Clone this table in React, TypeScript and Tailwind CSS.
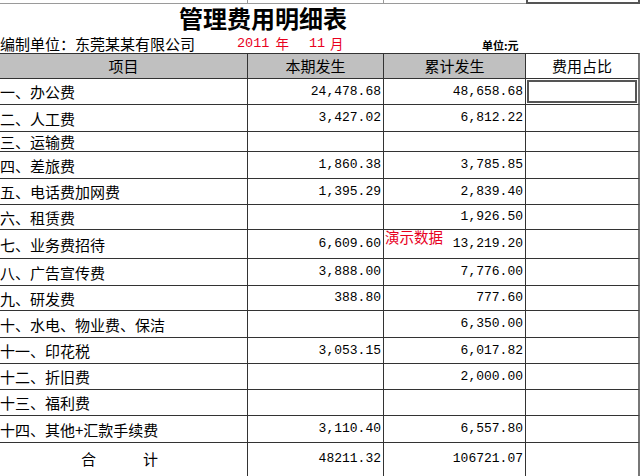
import React from "react";

const ROWS: [string, string, string, number][] = [
  ["一、办公费", "24,478.68", "48,658.68", 26],
  ["二、人工费", "3,427.02", "6,812.22", 27],
  ["三、运输费", "", "", 20],
  ["四、差旅费", "1,860.38", "3,785.85", 27],
  ["五、电话费加网费", "1,395.29", "2,839.40", 26],
  ["六、租赁费", "", "1,926.50", 25],
  ["七、业务费招待", "6,609.60", "13,219.20", 29],
  ["八、广告宣传费", "3,888.00", "7,776.00", 27],
  ["九、研发费", "388.80", "777.60", 25],
  ["十、水电、物业费、保洁", "", "6,350.00", 27],
  ["十一、印花税", "3,053.15", "6,017.82", 26],
  ["十二、折旧费", "", "2,000.00", 26],
  ["十三、福利费", "", "", 26],
  ["十四、其他+汇款手续费", "3,110.40", "6,557.80", 27],
];

const cjk = "font-['Noto_Sans_CJK_SC',sans-serif]";
const mono = "font-['Liberation_Mono',monospace]";

export default function App() {
  return (
    <div className={`relative w-[643px] h-[476px] overflow-hidden bg-white text-black ${cjk}`}>
      {/* strip of the cells above */}
      <div className="grid grid-cols-[248px_136px_142px_114px] h-[4px]">
        <div className="border-b border-r border-[#9a9a9a]" />
        <div className="border-b border-r border-[#9a9a9a]" />
        <div className="border-b border-[#9a9a9a]" />
        <div className="border-b-2 border-x-2 border-[#555]" />
      </div>

      {/* title */}
      <div className="w-[526px] h-[28px] flex items-center justify-center">
        <span className="text-[24px] font-bold leading-none">管理费用明细表</span>
      </div>

      {/* sub heading */}
      <div className="h-[21px] flex items-center pt-[2px]">
        <span className="w-[237px] text-[15px] leading-none">编制单位：东莞某某有限公司</span>
        <span className="w-[245px] flex items-center text-[13.5px] leading-none text-[#e8001e]">
          <span className={`${mono} text-[13.5px]`}>2011</span>
          <span className="ml-[6px]">年</span>
          <span className={`${mono} text-[13.5px] ml-[20px]`}>11</span>
          <span className="ml-[5px]">月</span>
        </span>
        <span className="text-[11px] font-bold leading-none pt-[3px]">单位:元</span>
      </div>

      {/* table */}
      <div className="grid grid-cols-[248px_136px_142px_114px]">
        <div className="h-[26px] bg-[#c0c0c0] border-y border-r border-[#333] flex items-center justify-center text-[15px]">项目</div>
        <div className="h-[26px] bg-[#c0c0c0] border-y border-r border-[#333] flex items-center justify-center text-[15px]">本期发生</div>
        <div className="h-[26px] bg-[#c0c0c0] border-y border-r border-[#333] flex items-center justify-center text-[15px]">累计发生</div>
        <div className="h-[26px] bg-white border-y border-r-2 border-[#333] border-r-[#777] flex items-center justify-center text-[15px]">费用占比</div>

        {ROWS.map(([name, cur, acc, h], i) => (
          <React.Fragment key={name}>
            <div style={{ height: h }} className="border-b border-r border-[#333] flex items-center text-[15px] leading-none whitespace-nowrap">
              {name}
            </div>
            <div style={{ height: h }} className={`border-b border-r border-[#333] flex items-center justify-end pr-[2px] text-[13px] ${mono}`}>
              {cur}
            </div>
            <div style={{ height: h }} className={`border-b border-r border-[#333] flex items-center justify-end pr-[2px] text-[13px] ${mono}`}>
              {acc}
            </div>
            <div style={{ height: h }} className="border-b border-r-2 border-[#333] border-r-[#777] flex">
              {i === 0 && <div className="flex-1 m-[1px] border-2 border-[#555]" />}
            </div>
          </React.Fragment>
        ))}

        <div className="h-[34px] border-r border-[#333] flex items-center text-[15px] leading-none pb-[3px]">
          <span className="ml-[81px]">合</span>
          <span className="ml-[47px]">计</span>
        </div>
        <div className={`h-[34px] border-r border-[#333] flex items-center justify-end pr-[2px] pb-[3px] text-[13px] ${mono}`}>48211.32</div>
        <div className={`h-[34px] border-r border-[#333] flex items-center justify-end pr-[2px] pb-[3px] text-[13px] ${mono}`}>106721.07</div>
        <div className="h-[34px] border-r-2 border-r-[#777]" />
      </div>

      {/* overlay note */}
      <span className="absolute left-[385px] top-[230px] text-[14.5px] leading-none text-[#e8001e]">演示数据</span>
    </div>
  );
}
